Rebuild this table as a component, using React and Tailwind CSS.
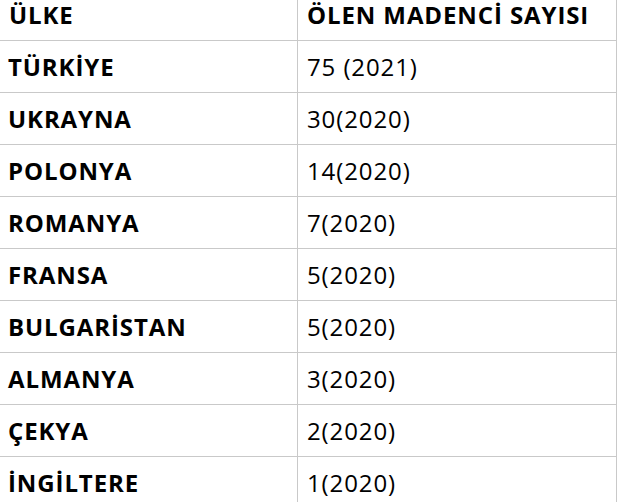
import React from "react";

const rows = [
  ["TÜRKİYE", "75 (2021)"],
  ["UKRAYNA", "30(2020)"],
  ["POLONYA", "14(2020)"],
  ["ROMANYA", "7(2020)"],
  ["FRANSA", "5(2020)"],
  ["BULGARİSTAN", "5(2020)"],
  ["ALMANYA", "3(2020)"],
  ["ÇEKYA", "2(2020)"],
  ["İNGİLTERE", "1(2020)"],
];

export default function App() {
  return (
    <div className="w-[642px] h-[502px] overflow-hidden bg-white text-black" style={{ fontFamily: '"Open Sans", "Noto Sans", sans-serif' }}>
      <div className="w-[617px] grid grid-cols-[298px_319px] text-[24px] leading-none tracking-[0.9px]">
        <div className="h-[41px] flex items-center pb-[11px] pl-[9px] border-r border-b border-[#c9c9c9] font-bold">ÜLKE</div>
        <div className="h-[41px] flex items-center pb-[11px] pl-[9px] border-r border-b border-[#c9c9c9] font-bold">ÖLEN MADENCİ SAYISI</div>
        {rows.map(([a, b]) => (
          <React.Fragment key={a}>
            <div className="h-[52px] flex items-center pl-[8px] border-r border-b border-[#c9c9c9] font-bold">{a}</div>
            <div className="h-[52px] flex items-center pl-[9px] border-r border-b border-[#c9c9c9]">{b}</div>
          </React.Fragment>
        ))}
      </div>
    </div>
  );
}
